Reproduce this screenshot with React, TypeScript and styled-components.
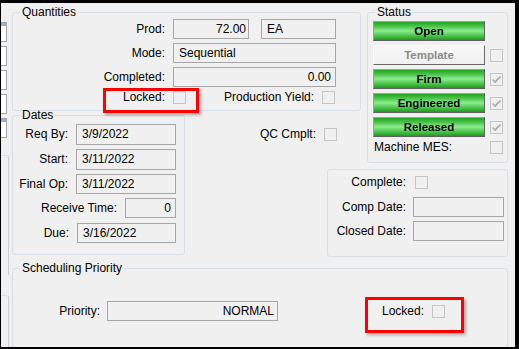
import React from 'react';
import styled, { createGlobalStyle, css } from 'styled-components';

const GlobalStyle = createGlobalStyle`
  html, body { margin: 0; padding: 0; background: #000; }
  body {
    font-family: "Liberation Sans", Arial, sans-serif;
    font-size: 12px;
    color: #000;
  }
  * { box-sizing: border-box; }
`;

const Frame = styled.div`
  width: 519px;
  height: 349px;
  background: #000;
  padding: 3px 4px 2px 1px;
  display: flex;
`;

const Surface = styled.div`
  flex: 1;
  background: #f0f0f0;
  display: flex;
  overflow: hidden;
`;

const LeftStrip = styled.div`
  width: 9px;
  flex: none;
  display: flex;
  flex-direction: column;
  gap: 4px;
  padding-top: 19px;
`;

const StubField = styled.div<{ $accent?: boolean }>`
  width: 6px;
  height: 20px;
  flex: none;
  background: #fff;
  border: 1px solid #a3a3a3;
  border-left: none;
  ${(p) =>
    p.$accent &&
    css`
      box-shadow: inset 0 3px 0 #8fb3de;
    `}
`;

const StubPanel = styled.div<{ $top: number; $h: number }>`
  width: 8px;
  height: ${(p) => p.$h}px;
  margin-top: ${(p) => p.$top}px;
  flex: none;
  border-top: 1px solid #d5dde5;
  border-right: 1px solid #c8ced6;
  border-top-right-radius: 3px;
`;

const Content = styled.div`
  flex: 1;
  display: grid;
  grid-template-columns: 2px 173px 142px 34px 6px 141px 7px;
  grid-template-rows: 105px 52px 94px 1fr;
  padding-top: 3px;
`;

const Group = styled.fieldset`
  margin: 0;
  padding: 0;
  min-width: 0;
  border: 1px solid #d5dde5;
  border-radius: 3px;
`;

const Legend = styled.legend`
  margin-left: 7px;
  padding: 0 2px;
  line-height: 13px;
`;

const QuantitiesGroup = styled(Group)`
  grid-column: 2 / 5;
  grid-row: 1 / 2;
`;

const StatusGroup = styled(Group)`
  grid-column: 6 / 7;
  grid-row: 1 / 3;
`;

const DatesGroup = styled(Group)`
  grid-column: 2 / 3;
  grid-row: 2 / 4;
  margin: -2px 0 2px;
`;

const SchedulingGroup = styled(Group)`
  grid-column: 2 / 7;
  grid-row: 4 / 5;
  margin-top: 5px;
  height: 100px;
`;

const CompleteBox = styled.div`
  grid-column: 4 / 7;
  grid-row: 3 / 4;
  margin-top: 6px;
  border: 1px solid #d5dde5;
  border-radius: 3px;
  display: flex;
  flex-direction: column;
  padding-top: 6px;
`;

const QcCell = styled.div`
  grid-column: 3 / 5;
  grid-row: 2 / 3;
  display: flex;
  justify-content: flex-end;
  align-items: flex-start;
  gap: 8px;
  padding: 17px 24px 0 0;
`;

const Stack = styled.div<{ $gap: number; $pt: number }>`
  display: flex;
  flex-direction: column;
  gap: ${(p) => p.$gap}px;
  padding-top: ${(p) => p.$pt}px;
`;

const FormRow = styled.div<{ $label: number; $gap?: number; $mt?: number }>`
  position: relative;
  display: grid;
  grid-template-columns: ${(p) => p.$label}px auto;
  column-gap: ${(p) => p.$gap ?? 8}px;
  align-items: center;
  justify-content: start;
  margin-top: ${(p) => p.$mt ?? 0}px;
`;

const Label = styled.span<{ $ml?: number }>`
  text-align: right;
  white-space: nowrap;
  line-height: 13px;
  margin-left: ${(p) => p.$ml ?? 0}px;
`;

const Inline = styled.div<{ $gap: number }>`
  display: flex;
  align-items: center;
  gap: ${(p) => p.$gap}px;
`;

const Field = styled.div<{ $w: number; $h?: number; $right?: boolean; $pr?: number }>`
  width: ${(p) => p.$w}px;
  height: ${(p) => p.$h ?? 20}px;
  border: 1px solid #a6a6a6;
  background: #f0f0f0;
  padding: 0 ${(p) => p.$pr ?? 4}px 0 5px;
  display: flex;
  align-items: center;
  justify-content: ${(p) => (p.$right ? 'flex-end' : 'flex-start')};
  white-space: nowrap;
  overflow: hidden;
  line-height: 13px;
`;

const Box = styled.span<{ $ml?: number }>`
  width: 13px;
  height: 13px;
  flex: none;
  border: 1px solid #c4c4c4;
  background: #f0f0f0;
  display: inline-flex;
  align-items: center;
  justify-content: center;
  margin-left: ${(p) => p.$ml ?? 0}px;
`;

const Check = ({ checked, ml }: { checked?: boolean; ml?: number }) => (
  <Box $ml={ml}>
    {checked && (
      <svg width="11" height="11" viewBox="0 0 11 11">
        <polyline points="1.5,5.5 4,8 9.5,2.5" fill="none" stroke="#a9a9a9" strokeWidth="1.7" />
      </svg>
    )}
  </Box>
);

const StatusButton = styled.div<{ $off?: boolean }>`
  width: 112px;
  height: 20px;
  flex: none;
  display: flex;
  align-items: center;
  justify-content: center;
  font-weight: bold;
  font-size: 11.5px;
  line-height: 13px;
  color: #000;
  border: 1px solid;
  border-color: #6fc06f #5f5f5f #5f5f5f #6fc06f;
  background: linear-gradient(
    to bottom,
    #23a123 0%,
    #46c246 22%,
    #8cec8c 50%,
    #46c246 78%,
    #1f9a1f 100%
  );
  ${(p) =>
    p.$off &&
    css`
      color: #8a8a8a;
      border-color: #ffffff #6a6a6a #6a6a6a #ffffff;
      background: linear-gradient(to bottom, #f7f7f7, #f0f0f0);
    `}
`;

const StatusRow = styled.div`
  display: flex;
  align-items: center;
  gap: 5px;
  padding-left: 5px;
`;

const MesLabel = styled.span`
  width: 112px;
  padding-left: 1px;
  line-height: 13px;
  white-space: nowrap;
`;

const Highlight = styled.div<{ $l: number; $t: number; $w: number; $h: number }>`
  position: absolute;
  left: ${(p) => p.$l}px;
  top: ${(p) => p.$t}px;
  width: ${(p) => p.$w}px;
  height: ${(p) => p.$h}px;
  border: 3px solid #ff0000;
  box-shadow: 2px 2px 3px rgba(0, 0, 0, 0.3);
  pointer-events: none;
`;

const PriorityRow = styled.div`
  position: relative;
  display: flex;
  align-items: center;
  margin-top: 26px;
`;

const PriorityLabel = styled.span`
  width: 87px;
  text-align: right;
  margin-right: 7px;
  line-height: 13px;
`;

const statuses = [
  { name: 'Open', off: false, box: false, checked: false },
  { name: 'Template', off: true, box: true, checked: false },
  { name: 'Firm', off: false, box: true, checked: true },
  { name: 'Engineered', off: false, box: true, checked: true },
  { name: 'Released', off: false, box: true, checked: true },
];

export default function App() {
  return (
    <>
      <GlobalStyle />
      <Frame>
        <Surface>
          <LeftStrip>
            <StubField $accent />
            <StubField />
            <StubField />
            <StubField />
            <StubField $accent />
            <StubPanel $top={13} $h={120} />
            <StubPanel $top={16} $h={60} />
          </LeftStrip>
          <Content>
            <QuantitiesGroup>
              <Legend>Quantities</Legend>
              <Stack $gap={4} $pt={0}>
                <FormRow $label={152}>
                  <Label>Prod:</Label>
                  <Inline $gap={12}>
                    <Field $w={76} $right $pr={2}>72.00</Field>
                    <Field $w={75}>EA</Field>
                  </Inline>
                </FormRow>
                <FormRow $label={152}>
                  <Label>Mode:</Label>
                  <Field $w={163}>Sequential</Field>
                </FormRow>
                <FormRow $label={152}>
                  <Label>Completed:</Label>
                  <Field $w={163} $right>0.00</Field>
                </FormRow>
                <FormRow $label={152}>
                  <Label>Locked:</Label>
                  <Inline $gap={0}>
                    <Check />
                    <Label $ml={38}>Production Yield:</Label>
                    <Check ml={8} />
                  </Inline>
                  <Highlight $l={90} $t={-3} $w={96} $h={25} />
                </FormRow>
              </Stack>
            </QuantitiesGroup>

            <StatusGroup>
              <Legend>Status</Legend>
              <Stack $gap={4} $pt={2}>
                {statuses.map((s) => (
                  <StatusRow key={s.name}>
                    <StatusButton $off={s.off}>{s.name}</StatusButton>
                    {s.box && <Check checked={s.checked} />}
                  </StatusRow>
                ))}
                <StatusRow>
                  <MesLabel>Machine MES:</MesLabel>
                  <Check />
                </StatusRow>
              </Stack>
            </StatusGroup>

            <DatesGroup>
              <Legend>Dates</Legend>
              <Stack $gap={4} $pt={2}>
                <FormRow $label={55}>
                  <Label>Req By:</Label>
                  <Field $w={100} $h={21}>3/9/2022</Field>
                </FormRow>
                <FormRow $label={55}>
                  <Label>Start:</Label>
                  <Field $w={100} $h={21}>3/11/2022</Field>
                </FormRow>
                <FormRow $label={55}>
                  <Label>Final Op:</Label>
                  <Field $w={100}>3/11/2022</Field>
                </FormRow>
                <FormRow $label={104}>
                  <Label>Receive Time:</Label>
                  <Field $w={51} $right>0</Field>
                </FormRow>
                <FormRow $label={56} $mt={1}>
                  <Label>Due:</Label>
                  <Field $w={99}>3/16/2022</Field>
                </FormRow>
              </Stack>
            </DatesGroup>

            <QcCell>
              <Label>QC Cmplt:</Label>
              <Check />
            </QcCell>

            <CompleteBox>
              <FormRow $label={78} $gap={7}>
                <Label>Complete:</Label>
                <Check ml={2} />
              </FormRow>
              <FormRow $label={78} $gap={7} $mt={8}>
                <Label>Comp Date:</Label>
                <Field $w={91} />
              </FormRow>
              <FormRow $label={78} $gap={7} $mt={4}>
                <Label>Closed Date:</Label>
                <Field $w={91} />
              </FormRow>
            </CompleteBox>

            <SchedulingGroup>
              <Legend>Scheduling Priority</Legend>
              <PriorityRow>
                <PriorityLabel>Priority:</PriorityLabel>
                <Field $w={171} $right $pr={3}>NORMAL</Field>
                <Label $ml={104}>Locked:</Label>
                <Check ml={8} />
                <Highlight $l={352} $t={-4} $w={99} $h={36} />
              </PriorityRow>
            </SchedulingGroup>
          </Content>
        </Surface>
      </Frame>
    </>
  );
}
